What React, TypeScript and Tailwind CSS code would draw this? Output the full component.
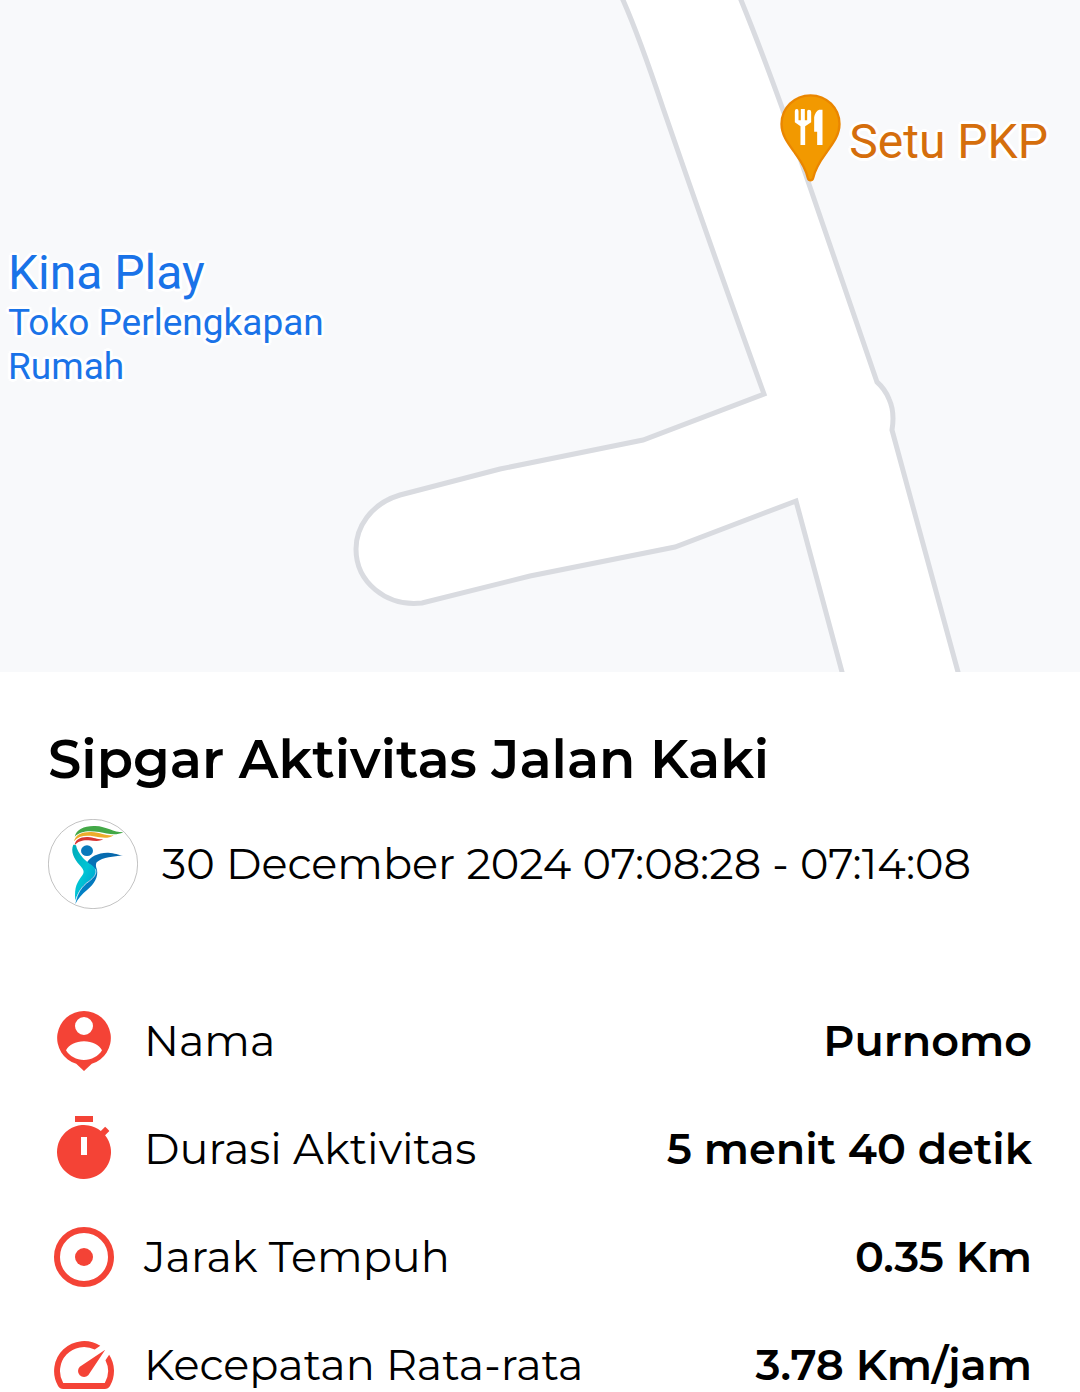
import type { ReactNode } from "react";

function MapRoads() {
  return (
    <svg
      aria-hidden="true"
      viewBox="0 0 1080 672"
      preserveAspectRatio="xMidYMid slice"
      className="block h-full w-full"
    >
      <path
        d="M614 -20 L623 0 C638 34 651 72 663 108 C692 192 727 292 764 394 L643 440 L500 469 L400 495 C370 504 356 528 356 549 C356 582 386 607 422 603 L530 576 L675 547 L796 501 L842 672 L848 694 H964 L958 672 L892 430 Q895 412 889 399 Q885 389 877 382 L811 190 Q772 76 741 0 L733 -20 Z"
        fill="#ffffff"
        stroke="#d9dbe0"
        strokeWidth="5"
      />
    </svg>
  );
}

function RestaurantPin() {
  return (
    <svg aria-hidden="true" viewBox="34 42 182 264" className="h-[88px] w-[61px]">
      <path
        d="M125 46 C77 46 38 84 38 132 C38 166 58 191 79 220 C99 247 111 268 117 294 Q119 301 125 301 Q131 301 133 294 C139 268 151 247 171 220 C192 191 212 166 212 132 C212 84 173 46 125 46 Z"
        fill="#f29900"
        stroke="#ea8600"
        strokeWidth="7"
      />
      <path
        d="M78 94 Q78 87 84 87 Q89 87 89 94 V121 H96 V87 H108 V121 H115 V94 Q115 89 120 89 Q127 89 127 96 V127 L109 139 V195 H95 V139 L78 127 Z"
        fill="#fff"
      />
      <path d="M161 89 V195 H145 V155 H136 V112 Q139 94 151 89 Z" fill="#fff" />
    </svg>
  );
}

function SipgarLogo() {
  return (
    <svg aria-hidden="true" viewBox="54 57 270 270" className="size-[90px] shrink-0">
      <defs>
        <linearGradient id="sash" x1="0" y1="0" x2="1" y2="1">
          <stop offset="0" stopColor="#00a9b8" />
          <stop offset="0.5" stopColor="#00c4d4" />
          <stop offset="1" stopColor="#0095cf" />
        </linearGradient>
        <linearGradient id="body" x1="0" y1="1" x2="1" y2="0">
          <stop offset="0" stopColor="#0086cb" />
          <stop offset="1" stopColor="#0864a8" />
        </linearGradient>
      </defs>
      <circle cx="189" cy="192" r="134" fill="#fff" stroke="#a3a3a3" strokeWidth="2" />
      <path d="M134 110 C139 88 163 77 195 78 C231 79 249 97 280 97 C254 109 232 100 208 96 C178 91 151 92 134 110 Z" fill="#43a847" />
      <path d="M132 124 C136 104 157 95 184 96 C213 98 228 108 251 106 C232 119 212 112 190 109 C164 105 145 109 132 124 Z" fill="#edac2b" />
      <path d="M134 136 C135 119 151 110 174 111 C193 112 202 119 220 118 C206 126 192 122 176 121 C157 120 144 124 134 136 Z" fill="#d93532" />
      <ellipse cx="171" cy="152" rx="18" ry="16" fill="#0879bb" />
      <path d="M170 188 C181 170 205 157 235 158 C254 159 265 165 279 166 C251 170 219 171 200 187 Q195 196 201 209 C205 230 193 252 172 269 C156 282 144 295 136 312 C140 287 147 269 163 253 C183 235 200 226 196 207 Q181 193 170 188 Z" fill="url(#body)" />
      <path d="M130 134 C121 154 132 176 148 194 C160 207 165 214 157 226 C142 247 132 260 136 302 C143 278 154 259 176 243 C190 232 201 222 197 208 C188 194 173 190 159 174 C148 161 140 148 138 136 Z" fill="url(#sash)" />
      <path d="M136 307 C143 279 154 260 177 244 C191 233 201 223 197 208" fill="none" stroke="#fff" strokeWidth="2" />
    </svg>
  );
}

function Icon({ children }: { children: ReactNode }) {
  return (
    <svg aria-hidden="true" viewBox="0 0 24 24" className="size-[72px] shrink-0 fill-[#f44336]">
      {children}
    </svg>
  );
}

const rows = [
  {
    label: "Nama",
    value: "Purnomo",
    icon: (
      <path
        fillRule="evenodd"
        d="M12 2a9 9 0 0 0-2.600 17.600L12 22l2.600-2.400A9 9 0 0 0 12 2Zm0 2a3 3 0 1 1 0 6 3 3 0 0 1 0-6ZM6 15.100c1-1.800 3.200-3 6-3s5 1.200 6 3c-1.200 2-3.500 3.200-6 3.200s-4.800-1.200-6-3.200Z"
      />
    ),
  },
  {
    label: "Durasi Aktivitas",
    value: "5 menit 40 detik",
    icon: (
      <path
        fillRule="evenodd"
        d="M9 1h6v2H9zM19.030 7.390l1.420-1.420c-.43-.51-.9-.99-1.410-1.410l-1.420 1.420A9 9 0 1 0 19.030 7.390ZM11 8h2v6h-2z"
      />
    ),
  },
  {
    label: "Jarak Tempuh",
    value: "0.35 Km",
    icon: (
      <>
        <circle cx="12" cy="12" r="9" fill="none" stroke="#f44336" strokeWidth="2" />
        <circle cx="12" cy="12" r="3" />
      </>
    ),
  },
  {
    label: "Kecepatan Rata-rata",
    value: "3.78 Km/jam",
    icon: (
      <path d="M20.380 8.570l-1.230 1.850a8 8 0 0 1-.22 7.580H5.070A8 8 0 0 1 15.580 6.850l1.850-1.230A10 10 0 0 0 3.350 19a2 2 0 0 0 1.720 1h13.850a2 2 0 0 0 1.740-1 10 10 0 0 0-.27-10.440zm-9.790 6.840a2 2 0 0 0 2.830 0l5.660-8.490-8.490 5.660a2 2 0 0 0 0 2.830z" />
    ),
  },
];

const halo =
  "[text-shadow:3px_0_1px_white,-3px_0_1px_white,0_3px_1px_white,0_-3px_1px_white,2px_2px_1px_white,-2px_-2px_1px_white,2px_-2px_1px_white,-2px_2px_1px_white]";

export default function App() {
  return (
    <div className="h-screen overflow-hidden bg-white font-['Montserrat','Inter',sans-serif] text-black">
      <section aria-label="Peta" className="relative h-[672px] overflow-hidden bg-[#f8f9fb] font-['Roboto',sans-serif]">
        <MapRoads />
        <div className="absolute top-[94px] right-8 flex items-center gap-2">
          <RestaurantPin />
          <span className={`pt-2 text-5xl text-[#d56e0c] ${halo}`}>Setu PKP</span>
        </div>
        <div className={`absolute top-[249px] left-2 text-[#1a73e8] ${halo}`}>
          <p className="text-5xl">Kina Play</p>
          <p className="mt-1 text-[37px] leading-11">
            Toko Perlengkapan
            <br />
            Rumah
          </p>
        </div>
      </section>

      <main className="px-12 pt-[51px]">
        <h1 className="text-[53px] leading-[72px] font-semibold">Sipgar Aktivitas Jalan Kaki</h1>
        <div className="mt-6 flex items-center gap-6">
          <SipgarLogo />
          <p className="text-[43px] leading-[60px] whitespace-nowrap">30 December 2024 07:08:28 - 07:14:08</p>
        </div>
        <dl className="mt-24 flex flex-col gap-9">
          {rows.map((row) => (
            <div key={row.label} className="flex items-center">
              <dt className="flex items-center gap-6 text-[43px] leading-[60px]">
                <Icon>{row.icon}</Icon>
                {row.label}
              </dt>
              <dd className="ml-auto text-[43px] leading-[60px] font-semibold">{row.value}</dd>
            </div>
          ))}
        </dl>
      </main>
    </div>
  );
}
